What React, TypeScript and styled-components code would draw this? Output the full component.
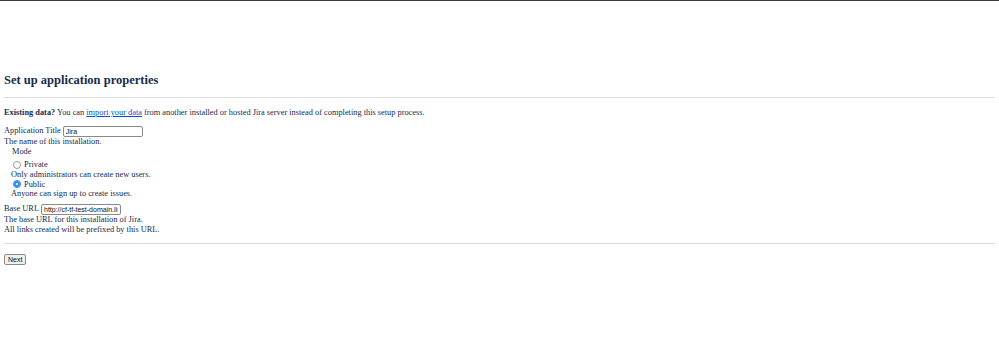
import styled, { createGlobalStyle } from 'styled-components';

const GlobalStyle = createGlobalStyle`
  html, body {
    margin: 0;
    padding: 0;
    background: #ffffff;
  }
  body {
    font-family: "Liberation Serif", "Times New Roman", serif;
    font-size: 8.35px;
    color: #172b4d;
  }
`;

const TopBar = styled.div`
  height: 1px;
  background: #3a3a3a;
`;

const Main = styled.main`
  padding: 72px 4px 0;
`;

const Title = styled.h2`
  margin: 0;
  font-size: 12.5px;
  line-height: 15px;
  font-weight: bold;
  color: #172b4d;
`;

const Divider = styled.hr<{ $top: number; $bottom: number }>`
  border: 0;
  border-top: 1px solid #dcdcdc;
  margin: ${({ $top }) => $top}px 0 ${({ $bottom }) => $bottom}px;
`;

const Intro = styled.p`
  margin: 0;
  line-height: 10px;

  a {
    color: #0052cc;
  }
`;

const FieldRow = styled.div<{ $top: number }>`
  display: flex;
  align-items: center;
  gap: 2px;
  height: 12px;
  margin-top: ${({ $top }) => $top}px;
`;

const Label = styled.label`
  line-height: 10px;
`;

const TextInput = styled.input`
  box-sizing: border-box;
  width: 80px;
  height: 11px;
  padding: 0 2px;
  border: 1px solid #8a8a8a;
  border-radius: 2px;
  font-family: "Liberation Sans", Arial, sans-serif;
  font-size: 7px;
  color: #111111;
  background: #ffffff;
  outline: none;
`;

const Description = styled.div`
  line-height: 9.7px;
`;

const ModeGroup = styled.fieldset`
  border: 0;
  margin: 0;
  padding: 0 0 0 7px;
`;

const Legend = styled.div`
  line-height: 8px;
  padding-left: 1px;
  margin: 1px 0 4px;
`;

const RadioRow = styled.label`
  display: flex;
  align-items: center;
  gap: 3px;
  height: 10px;
  padding-left: 2px;
`;

const Radio = styled.input`
  appearance: none;
  box-sizing: border-box;
  width: 8px;
  height: 8px;
  margin: 0;
  border-radius: 50%;
  border: 1px solid #9a9a9a;
  background: #ffffff;

  &:checked {
    border-color: #3a8cf5;
    background: #3a8cf5;
    box-shadow: inset 0 0 0 2px #3a8cf5, inset 0 0 0 4px #ffffff;
  }
`;

const Button = styled.button`
  box-sizing: border-box;
  height: 11px;
  padding: 0 3px;
  border: 1px solid #8a8a8a;
  border-radius: 2px;
  background: #efefef;
  font-family: "Liberation Sans", Arial, sans-serif;
  font-size: 7px;
  line-height: 9px;
  color: #111111;
`;

const App = () => {
  return (
    <>
      <GlobalStyle />
      <TopBar />
      <Main>
        <Title>Set up application properties</Title>
        <Divider $top={9} $bottom={10} />
        <Intro>
          <b>Existing data?</b> You can <a href="#">import your data</a> from another installed or hosted Jira server
          instead of completing this setup process.
        </Intro>
        <FieldRow $top={7}>
          <Label htmlFor="title">Application Title</Label>
          <TextInput id="title" defaultValue="Jira" />
        </FieldRow>
        <Description>The name of this installation.</Description>
        <ModeGroup>
          <Legend>Mode</Legend>
          <RadioRow>
            <Radio type="radio" name="mode" />
            Private
          </RadioRow>
          <Description>Only administrators can create new users.</Description>
          <RadioRow>
            <Radio type="radio" name="mode" defaultChecked />
            Public
          </RadioRow>
          <Description>Anyone can sign up to create issues.</Description>
        </ModeGroup>
        <FieldRow $top={4}>
          <Label htmlFor="baseurl">Base URL</Label>
          <TextInput id="baseurl" defaultValue="http://cf-tf-test-domain.link" />
        </FieldRow>
        <Description>The base URL for this installation of Jira.</Description>
        <Description>All links created will be prefixed by this URL.</Description>
        <Divider $top={8} $bottom={10} />
        <Button type="button">Next</Button>
      </Main>
    </>
  );
};

export default App;
